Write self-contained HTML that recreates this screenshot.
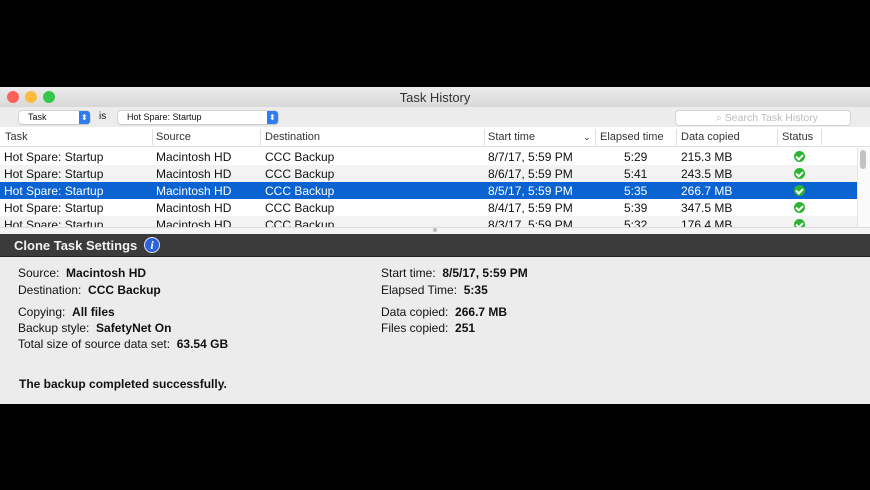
<!DOCTYPE html>
<html><head><meta charset="utf-8"><style>
*{margin:0;padding:0;box-sizing:border-box}
body{width:870px;height:490px;background:#000;position:relative;overflow:hidden;font-family:"Liberation Sans",sans-serif;color:#111}
.a{position:absolute;white-space:nowrap}
.win{position:absolute;left:0;top:87px;width:870px;height:317px;background:#ececec}
.title{position:absolute;left:0;top:0;width:870px;height:20px;background:linear-gradient(#ebebeb,#d9d9d9);text-align:center;font-size:13px;line-height:21px;color:#333}
.dot{position:absolute;top:4px;width:12px;height:12px;border-radius:50%}
.pop{position:absolute;top:24px;height:13px;background:#fff;border-radius:3px;box-shadow:0 0 0 0.5px #bbb,0 1px 1px #ccc;font-size:9px;line-height:13px;padding-left:9px}
.pop i{position:absolute;right:0;top:0;width:11px;height:13px;background:#2f7df0;border-radius:0 3px 3px 0}
.pop i:after{content:"⬍";position:absolute;left:2px;top:0;color:#fff;font-style:normal;font-size:8px}
.tbl{position:absolute;left:0;top:40px;width:870px;height:100px;background:#fff;overflow:hidden}
.hd{position:absolute;top:0;left:0;width:870px;height:20px;border-bottom:1px solid #ddd;font-size:11px;line-height:20px;color:#333}
.sep{position:absolute;top:2px;width:1px;height:16px;background:#e0e0e0}
.row{position:absolute;left:0;width:857px;height:17px;font-size:12px;line-height:18px}
.row span{position:absolute;top:0}
.alt{background:#f3f3f3}
.sel{background:#0a63d1;color:#fff}
.ok{position:absolute;width:11px;height:11px;border-radius:50%;background:#2cb431;left:794px;top:3px}
.ok:after{content:"";position:absolute;left:3px;top:2px;width:3px;height:5px;border:solid #fff;border-width:0 2px 2px 0;transform:rotate(45deg)}
.lbl{font-size:12px}
b{font-weight:bold}
</style></head><body>
<div class="win">
 <div class="title">Task History
  <div class="dot" style="left:7px;background:#fc605b"></div>
  <div class="dot" style="left:25px;background:#fdbc40"></div>
  <div class="dot" style="left:43px;background:#34c84a"></div>
 </div>
 <div class="pop" style="left:19px;width:71px">Task<i></i></div>
 <div class="a" style="left:99px;top:24px;font-size:10px">is</div>
 <div class="pop" style="left:118px;width:160px">Hot Spare: Startup<i></i></div>
 <div class="a" style="left:675px;top:23px;width:176px;height:16px;background:#fff;border:1px solid #d4d4d4;border-radius:4px;font-size:10.5px;color:#bbb;line-height:14px;padding-left:40px">⌕ Search Task History</div>
 <div class="tbl">
  <div class="hd">
   <span class="a" style="left:5px">Task</span><div class="sep" style="left:152px"></div>
   <span class="a" style="left:156px">Source</span><div class="sep" style="left:260px"></div>
   <span class="a" style="left:265px">Destination</span><div class="sep" style="left:484px"></div>
   <span class="a" style="left:488px">Start time</span><span class="a" style="left:583px;font-size:9px">⌄</span><div class="sep" style="left:595px"></div>
   <span class="a" style="left:600px">Elapsed time</span><div class="sep" style="left:676px"></div>
   <span class="a" style="left:681px">Data copied</span><div class="sep" style="left:777px"></div>
   <span class="a" style="left:782px">Status</span><div class="sep" style="left:821px"></div>
  </div>
  <div class="row" style="top:21px"><span style="left:4px">Hot Spare: Startup</span><span style="left:156px">Macintosh HD</span><span style="left:265px">CCC Backup</span><span style="left:488px">8/7/17, 5:59 PM</span><span style="left:624px">5:29</span><span style="left:681px">215.3 MB</span><div class="ok"></div></div>
  <div class="row alt" style="top:38px"><span style="left:4px">Hot Spare: Startup</span><span style="left:156px">Macintosh HD</span><span style="left:265px">CCC Backup</span><span style="left:488px">8/6/17, 5:59 PM</span><span style="left:624px">5:41</span><span style="left:681px">243.5 MB</span><div class="ok"></div></div>
  <div class="row sel" style="top:55px"><span style="left:4px">Hot Spare: Startup</span><span style="left:156px">Macintosh HD</span><span style="left:265px">CCC Backup</span><span style="left:488px">8/5/17, 5:59 PM</span><span style="left:624px">5:35</span><span style="left:681px">266.7 MB</span><div class="ok"></div></div>
  <div class="row" style="top:72px"><span style="left:4px">Hot Spare: Startup</span><span style="left:156px">Macintosh HD</span><span style="left:265px">CCC Backup</span><span style="left:488px">8/4/17, 5:59 PM</span><span style="left:624px">5:39</span><span style="left:681px">347.5 MB</span><div class="ok"></div></div>
  <div class="row alt" style="top:89px"><span style="left:4px">Hot Spare: Startup</span><span style="left:156px">Macintosh HD</span><span style="left:265px">CCC Backup</span><span style="left:488px">8/3/17, 5:59 PM</span><span style="left:624px">5:32</span><span style="left:681px">176.4 MB</span><div class="ok"></div></div>
  <div class="a" style="left:857px;top:21px;width:13px;height:79px;background:#fafafa;border-left:1px solid #e6e6e6"></div>
  <div class="a" style="left:860px;top:23px;width:6px;height:19px;background:#c2c2c2;border-radius:3px"></div>
 </div>
 <div class="a" style="left:0;top:140px;width:870px;height:7px;background:#f4f4f4;border-top:1px solid #ddd"></div>
 <div class="a" style="left:433px;top:141px;width:4px;height:4px;border-radius:50%;background:#bbb"></div>
 <div class="a" style="left:0;top:147px;width:870px;height:23px;background:#3b3b3b;border-bottom:1px solid #222"></div>
 <div class="a" style="left:14px;top:151px;color:#f2f2f2;font-size:13px;font-weight:bold;line-height:16px">Clone Task Settings</div>
 <div class="a" style="left:144px;top:150px;width:16px;height:16px;border-radius:50%;background:#2d62d8;border:1px solid #dfe6ff;color:#fff;font:italic bold 12px/14px 'Liberation Serif',serif;text-align:center">i</div>
 <div class="a lbl" style="left:18px;top:179px">Source:&nbsp; <b>Macintosh HD</b></div>
 <div class="a lbl" style="left:18px;top:196px">Destination:&nbsp; <b>CCC Backup</b></div>
 <div class="a lbl" style="left:18px;top:218px">Copying:&nbsp; <b>All files</b></div>
 <div class="a lbl" style="left:18px;top:234px">Backup style:&nbsp; <b>SafetyNet On</b></div>
 <div class="a lbl" style="left:18px;top:250px">Total size of source data set:&nbsp; <b>63.54 GB</b></div>
 <div class="a lbl" style="left:19px;top:290px"><b>The backup completed successfully.</b></div>
 <div class="a lbl" style="left:381px;top:179px">Start time:&nbsp; <b>8/5/17, 5:59 PM</b></div>
 <div class="a lbl" style="left:381px;top:196px">Elapsed Time:&nbsp; <b>5:35</b></div>
 <div class="a lbl" style="left:381px;top:218px">Data copied:&nbsp; <b>266.7 MB</b></div>
 <div class="a lbl" style="left:381px;top:234px">Files copied:&nbsp; <b>251</b></div>
</div>
</body></html>
